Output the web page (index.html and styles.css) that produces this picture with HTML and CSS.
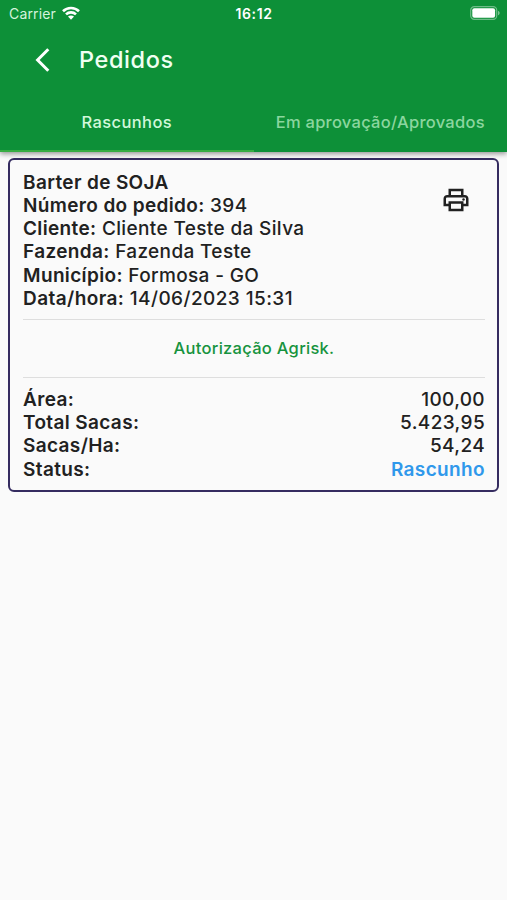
FILE: index.html
```html
<!DOCTYPE html>
<html lang="pt-BR">
<head>
<meta charset="utf-8">
<title>Pedidos</title>
<link rel="stylesheet" href="styles.css">
</head>
<body>
<header class="header">
  <div class="status-bar">
    <div class="carrier">
      <span>Carrier</span>
      <svg class="wifi" viewBox="0 0 18 14" width="18" height="14" fill="none" stroke="#fff" stroke-width="2.6"><path d="M1 5.200C5.400.9 12.600.9 17 5.200M4 8.400c2.800-2.700 7.200-2.700 10 0"/><path d="M6 10.600c1.700-1.500 4.300-1.500 6 0L9 13.700z" fill="#fff" stroke="none"/></svg>
    </div>
    <span class="clock">16:12</span>
    <svg class="battery" viewBox="0 0 30 14" width="30" height="14"><rect x=".7" y=".7" width="26" height="12.6" rx="3.6" fill="none" stroke="#fff" stroke-opacity=".4" stroke-width="1.2"/><rect x="2.3" y="2.3" width="22.8" height="9.4" rx="2" fill="#fff"/><path d="M28 4.700c2.200.8 2.200 3.800 0 4.600z" fill="#fff" fill-opacity=".45"/></svg>
  </div>
  <div class="title-bar">
    <svg class="back" viewBox="0 0 16 24" width="16" height="24" fill="none" stroke="#fff" stroke-width="3"><path d="M13.300 1.200 2.600 12l10.700 10.800"/></svg>
    <h1 class="title">Pedidos</h1>
  </div>
  <nav class="tabs">
    <div class="tab tab-active">Rascunhos</div>
    <div class="tab tab-pending">Em aprovação/Aprovados</div>
  </nav>
</header>
<main class="card">
  <section class="order">
    <div class="details">
      <div class="row"><b>Barter de SOJA</b></div>
      <div class="row"><b>Número do pedido:</b> 394</div>
      <div class="row"><b>Cliente:</b> Cliente Teste da Silva</div>
      <div class="row"><b>Fazenda:</b> Fazenda Teste</div>
      <div class="row"><b>Município:</b> Formosa - GO</div>
      <div class="row row-date"><b>Data/hora:</b> 14/06/2023 15:31</div>
    </div>
    <svg class="print" viewBox="0 0 24 24" width="30" height="30"><path fill="#212121" d="M19 8h-1V3H6v5H5c-1.660 0-3 1.340-3 3v6h4v4h12v-4h4v-6c0-1.660-1.340-3-3-3zM8 5h8v3H8V5zm8 12v2H8v-4h8v2zm2-2v-2H6v2H4v-4c0-.55.45-1 1-1h14c.55 0 1 .45 1 1v4h-2z"/><circle cx="18" cy="11.5" r="1" fill="#212121"/></svg>
  </section>
  <p class="notice">Autorização Agrisk.</p>
  <section class="totals">
    <div class="row"><b>Área:</b><span class="amount">100,00</span></div>
    <div class="row"><b>Total Sacas:</b><span class="amount">5.423,95</span></div>
    <div class="row"><b>Sacas/Ha:</b><span class="amount">54,24</span></div>
    <div class="row"><b>Status:</b><span class="draft">Rascunho</span></div>
  </section>
</main>
</body>
</html>
```
FILE: styles.css
```css
* { box-sizing: border-box; }
body {
  margin: 0;
  min-height: 900px;
  background: #fafafa;
  color: #212121;
  font-family: Inter, "Liberation Sans", sans-serif;
}
.header {
  height: 152px;
  background: #0d9038;
  color: #fff;
  box-shadow: 0 2px 5px rgba(0, 0, 0, .4);
}
.status-bar {
  display: grid;
  grid-template-columns: 1fr auto 1fr;
  align-items: center;
  height: 27px;
  padding: 0 7px 0 9px;
}
.carrier { display: flex; align-items: center; gap: 6px; font-size: 14px; letter-spacing: .15px; color: #d5f3dd; }
.wifi { margin-top: -2px; }
.clock { margin-left: -1px; font-size: 14px; font-weight: 600; letter-spacing: .65px; }
.battery { justify-self: end; margin-top: -1px; }
.title-bar { display: flex; align-items: center; height: 65px; padding-left: 35px; }
.title { margin: 0 0 0 28px; font-size: 23.5px; font-weight: 500; letter-spacing: .6px; color: #effff2; }
.tabs { display: grid; grid-template-columns: 1fr 1fr; height: 60px; }
.tab {
  display: flex;
  align-items: center;
  justify-content: center;
  padding-top: 1px;
  border-bottom: 2px solid transparent;
  font-size: 16.5px;
  font-weight: 500;
  letter-spacing: .4px;
  color: #8bd69f;
  white-space: nowrap;
}
.tab-active { border-color: #36ac43; color: #d2f8db; }
.tab-pending { letter-spacing: .27px; }
.card {
  height: 334px;
  margin: 6px 8px 0;
  padding: 10.6px 12px 0 13px;
  border: 2px solid #352c60;
  border-radius: 6px;
}
.row { height: 23.25px; font-size: 19px; font-weight: 450; line-height: 23.25px; letter-spacing: .36px; white-space: nowrap; }
.row b { font-weight: 580; }
.row-date { letter-spacing: .42px; }
.order { display: flex; justify-content: space-between; height: 149.4px; border-bottom: 1.5px solid #dedede; }
.print { margin: 14.4px 14px 0 0; }
.notice {
  display: flex;
  align-items: center;
  justify-content: center;
  height: 58px;
  margin: 0;
  border-bottom: 1.5px solid #dedede;
  font-size: 16.5px;
  font-weight: 500;
  letter-spacing: .28px;
  color: #16933e;
}
.totals { padding-top: 10px; }
.totals .row { display: flex; justify-content: space-between; }
.amount { letter-spacing: .36px; }
.draft { color: #2f98eb; font-weight: 600; }
```
